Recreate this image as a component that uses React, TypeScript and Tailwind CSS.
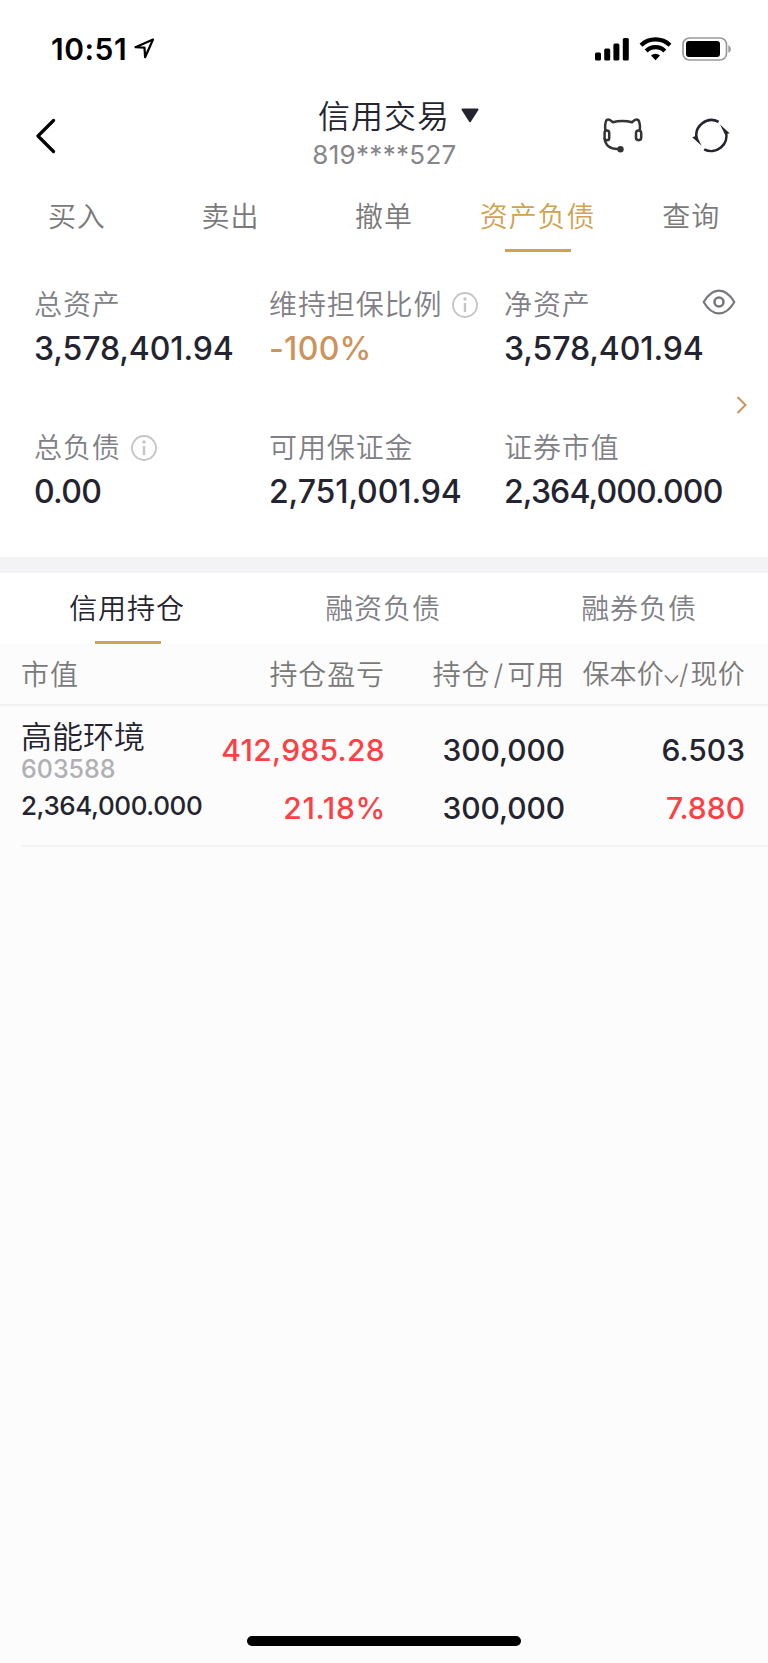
import clsx from "clsx";

type Stat = {
  label: string;
  value: string;
  info?: boolean;
  accent?: boolean;
  spacing: string;
};

const TABS = ["买入", "卖出", "撤单", "资产负债", "查询"];

const STATS: Stat[] = [
  { label: "总资产", value: "3,578,401.94", spacing: "tracking-[-0.1px]" },
  { label: "维持担保比例", value: "-100%", info: true, accent: true, spacing: "tracking-[0.3px]" },
  { label: "净资产", value: "3,578,401.94", spacing: "tracking-[-0.1px]" },
  { label: "总负债", value: "0.00", info: true, spacing: "tracking-[-0.7px]" },
  { label: "可用保证金", value: "2,751,001.94", spacing: "tracking-[-0.1px]" },
  { label: "证券市值", value: "2,364,000.000", spacing: "tracking-[-0.85px]" },
];

const POSITION_TABS = ["信用持仓", "融资负债", "融券负债"];

function StatusBar() {
  return (
    <div className="flex h-24 items-center justify-between pl-[51px] pr-9 text-black">
      <div className="flex items-center gap-[6px] pt-[1px]">
        <span className="w-[77px] whitespace-nowrap text-[30px] font-semibold leading-none tracking-[0.5px]">10:51</span>
        <svg width="21" height="22" viewBox="0 0 21 22" fill="none" stroke="currentColor" strokeWidth="2.2" strokeLinejoin="round">
          <path d="M19 1.5 1.5 9.2l9 .4.6 9.6z" />
        </svg>
      </div>
      <div className="flex items-center pt-[2px]">
        <svg width="34" height="23" viewBox="0 0 34 23" fill="currentColor">
          <rect x="0" y="14.5" width="6" height="8" rx="1.5" />
          <rect x="9.2" y="10.5" width="6" height="12" rx="1.5" />
          <rect x="18.4" y="5.5" width="6" height="17" rx="1.5" />
          <rect x="27.8" y="0" width="6" height="22.5" rx="1.5" />
        </svg>
        <svg className="ml-[10px]" width="33" height="24" viewBox="0 0 33 24" fill="none" stroke="currentColor" strokeWidth="4.2">
          <path d="M2 8.2a21 21 0 0 1 29 0" />
          <path d="M7.2 14a13.2 13.2 0 0 1 18.6 0" />
          <path d="M16.500 23.200 12 18.600a6.400 6.400 0 0 1 9 0z" fill="currentColor" stroke="none" />
        </svg>
        <svg className="ml-[10px]" width="50" height="24" viewBox="0 0 50 24" fill="none">
          <rect x="1" y="1" width="43.500" height="22" rx="6.500" stroke="#9a9a9a" strokeWidth="1.700" />
          <rect x="4" y="4" width="34" height="16" rx="3" fill="#000" />
          <path d="M46.300 8.200c3.400 1.600 3.400 6 0 7.600z" fill="#9a9a9a" />
        </svg>
      </div>
    </div>
  );
}

function Header() {
  return (
    <div className="flex h-[88px] justify-between pl-9 pr-[37px]">
      <svg className="mt-[22px]" width="20" height="36" viewBox="0 0 20 36" fill="none" stroke="#000" strokeWidth="3.2" strokeLinecap="round" strokeLinejoin="round">
        <path d="M17.5 2.5 2 18l15.5 15.5" />
      </svg>
      <div className="ml-[111px] flex flex-col items-center">
        <div className="flex items-center gap-[11px] pl-[28px] pt-[2px]">
          <h1 className="text-[32px] font-[350] leading-[38px] tracking-[1px] text-[#242430]">信用交易</h1>
          <svg className="-mt-1" width="18" height="15" viewBox="0 0 18 15" fill="#242430" stroke="#242430" strokeWidth="2" strokeLinejoin="round">
            <path d="M1.5 1.5h15L9 13.2z" />
          </svg>
        </div>
        <p className="text-[26px] leading-[38px] tracking-[0.3px] text-[#85858a]">819****527</p>
      </div>
      <div className="mt-[22px] flex gap-[47px]">
        <svg width="42" height="38" viewBox="0 0 42 38" fill="none" stroke="#333" strokeWidth="2.5" strokeLinejoin="round">
          <path d="M3.600 13C2.700 9 3.200 3.600 4.600 2c1.500-1 4.200.2 6 2.200 6-1.600 13.400-1.600 19.600 0 1.800-2 4.500-3.200 6-2.200C37.800 3.600 38.400 9 37.600 13" />
          <rect x="2.600" y="12.600" width="4.600" height="9.600" rx="2.300" />
          <rect x="34" y="12.600" width="5.200" height="9.600" rx="2.600" />
          <path d="M2.600 20C3 27.500 8.500 31.600 17 31" />
          <circle cx="18.500" cy="31.200" r="3.200" fill="#333" stroke="none" />
        </svg>
        <svg width="40" height="38" viewBox="0 0 40 38" fill="none" stroke="#242430" strokeWidth="2.600">
          <path d="M27.600 3.800A15.200 15.200 0 0 0 5.700 20.500" />
          <path d="M13.200 31.300A15.200 15.200 0 0 0 34.800 13.500" />
          <path d="M29 6.500 38.600 15.200l-4.600 1.400z" fill="#242430" stroke="none" />
          <path d="M10.600 27.800 1.200 19.200l4.600-1.400z" fill="#242430" stroke="none" />
        </svg>
      </div>
    </div>
  );
}

function InfoIcon() {
  return (
    <svg width="26" height="26" viewBox="0 0 26 26" fill="none" stroke="#c4c4c6">
      <circle cx="13" cy="13" r="12" strokeWidth="1.800" />
      <path d="M13 11v9" strokeWidth="2.400" />
      <circle cx="13" cy="7" r="1.700" fill="#c4c4c6" stroke="none" />
    </svg>
  );
}

function EyeIcon() {
  return (
    <svg width="34" height="26" viewBox="0 0 34 26" fill="none" stroke="#77777d" strokeWidth="2.200" strokeLinejoin="round">
      <path d="M1.700 13C6 5.500 11 1.600 17 1.600S28 5.500 32.300 13C28 20.500 23 24.400 17 24.400S6 20.500 1.700 13z" />
      <circle cx="17" cy="13" r="4.500" strokeWidth="2.600" />
    </svg>
  );
}

function Summary() {
  return (
    <section className="relative h-[304px] pt-[34px]">
      <div className="grid grid-cols-[235px_235px_1fr] gap-y-[61px] pl-[34px]">
        {STATS.map((s) => (
          <div key={s.label}>
            <div className="flex h-9 items-center gap-[10px] text-[28px] font-[350] leading-9 tracking-[0.9px] text-[#808086]">
              {s.label}
              {s.info && <InfoIcon />}
            </div>
            <div
              className={clsx(
                "mt-[6px] whitespace-nowrap text-[32px] font-medium leading-10",
                s.spacing,
                s.accent ? "text-[#cc935c]" : "text-[#242430]"
              )}
            >
              {s.value}
            </div>
          </div>
        ))}
      </div>
      <button className="absolute right-[32px] top-[36px]">
        <EyeIcon />
      </button>
      <svg className="absolute right-[21px] top-[142px]" width="11" height="20" viewBox="0 0 11 20" fill="none" stroke="#cc935c" strokeWidth="2">
        <path d="M1.500 2 9.500 10l-8 8" />
      </svg>
    </section>
  );
}

function Holdings() {
  return (
    <section>
      <div className="grid h-[60px] grid-cols-[192px_172px_180px_180px] pl-[21px] text-[28px] font-[350] leading-[62px] tracking-[0.9px] text-[#7a7a7a]">
        <span>市值</span>
        <span className="text-right">持仓盈亏</span>
        <span className="text-right">
          持仓<span className="px-[3px]">/</span>可用
        </span>
        <span className="flex items-center justify-end whitespace-nowrap text-[27px] tracking-[0.2px]">
          保本价
          <svg className="mt-2" width="15" height="11" viewBox="0 0 15 11" fill="none" stroke="#7a7a7a" strokeWidth="1.700">
            <path d="m1 1.500 6.500 7 6.500-7" />
          </svg>
          <span className="pr-[2px]">/</span>现价
        </span>
      </div>
      <div className="h-[2px] bg-[#f3f3f4]" />
      <div className="grid h-[139px] grid-cols-[192px_172px_180px_180px] pl-[21px] text-[30px] font-medium leading-[58px] text-[#242430]">
        <div className="whitespace-nowrap pt-[12px]">
          <p className="text-[31px] font-[350] leading-[38px]">高能环境</p>
          <p className="text-[25px] leading-[26px] text-[#b0b0b4]">603588</p>
          <p className="text-[26px] leading-[48px] tracking-[-0.4px]">2,364,000.000</p>
        </div>
        <div className="pt-[15px] text-right text-[#fc4043]">
          <p className="tracking-[0.3px]">412,985.28</p>
          <p className="-mr-px tracking-[0.7px]">21.18%</p>
        </div>
        <div className="pt-[15px] text-right tracking-[-0.1px]">
          <p>300,000</p>
          <p>300,000</p>
        </div>
        <div className="pt-[15px] text-right">
          <p>6.503</p>
          <p className="text-[#fc4043]">7.880</p>
        </div>
      </div>
      <div className="ml-[21px] h-[2px] bg-[#f3f3f4]" />
    </section>
  );
}

export default function App() {
  return (
    <div className="flex h-[1663px] w-[768px] flex-col overflow-hidden bg-[#fcfcfc] font-['Inter','Noto_Sans_CJK_SC',sans-serif]">
      <div className="bg-white">
        <StatusBar />
        <Header />
        <nav className="grid h-[69px] grid-cols-5 text-center text-[28px] font-[350] leading-[65px] tracking-[0.900px] text-[#7a7a7a]">
          {TABS.map((tab) => (
            <div key={tab} className={clsx("flex flex-col items-center pt-px", tab === "资产负债" && "text-[#d0a353]")}>
              {tab}
              {tab === "资产负债" && <span className="-mt-px h-[3px] w-[66px] bg-[#d0a353]" />}
            </div>
          ))}
        </nav>
        <Summary />
        <div className="h-4 bg-[#f3f3f5]" />
        <nav className="grid h-[71px] grid-cols-3 text-[28px] font-[350] leading-[68px] tracking-[0.900px] text-[#808086]">
          {POSITION_TABS.map((tab, i) => (
            <div key={tab} className={clsx("flex flex-col items-center pt-[2px]", i === 0 && "text-[#242430]")}>
              <span className="-ml-[2px]">{tab}</span>
              {i === 0 && <span className="-mt-[2px] h-[3px] w-[66px] bg-[#d0a353]" />}
            </div>
          ))}
        </nav>
      </div>
      <Holdings />
      <div className="mx-auto mb-[17px] mt-auto h-[10px] w-[274px] rounded-full bg-black" />
    </div>
  );
}
